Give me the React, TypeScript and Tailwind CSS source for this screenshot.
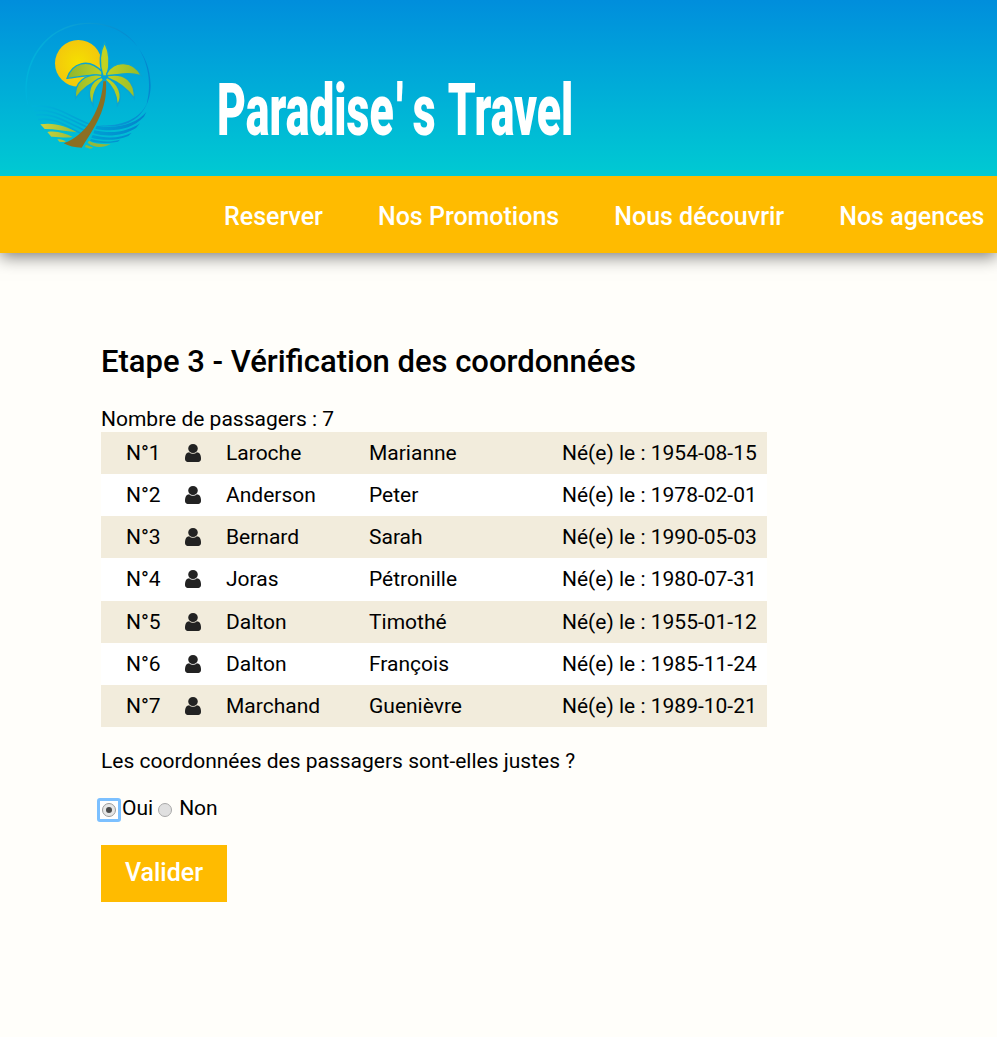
import React from "react";

const passengers = [
  ["Laroche", "Marianne", "1954-08-15"],
  ["Anderson", "Peter", "1978-02-01"],
  ["Bernard", "Sarah", "1990-05-03"],
  ["Joras", "Pétronille", "1980-07-31"],
  ["Dalton", "Timothé", "1955-01-12"],
  ["Dalton", "François", "1985-11-24"],
  ["Marchand", "Guenièvre", "1989-10-21"],
];

function Logo() {
  return (
    <svg viewBox="0 0 480 480" className="h-40 w-40 shrink-0" fill="none">
      <defs>
        <linearGradient id="ring" x1="50" y1="250" x2="425" y2="200" gradientUnits="userSpaceOnUse">
          <stop offset="0" stopColor="#00b4dc" />
          <stop offset="0.45" stopColor="#0a9fd6" />
          <stop offset="1" stopColor="#0486cf" />
        </linearGradient>
        <linearGradient id="wave" x1="60" y1="0" x2="410" y2="0" gradientUnits="userSpaceOnUse">
          <stop offset="0" stopColor="#00b4da" />
          <stop offset="0.5" stopColor="#00a2d4" />
          <stop offset="1" stopColor="#0482cc" />
        </linearGradient>
        <radialGradient id="sun">
          <stop offset="0" stopColor="#f5e000" />
          <stop offset="1" stopColor="#f3c80c" />
        </radialGradient>
        <linearGradient id="leaf" x1="170" y1="0" x2="395" y2="0" gradientUnits="userSpaceOnUse">
          <stop offset="0" stopColor="#8db52e" />
          <stop offset="0.5" stopColor="#c5d420" />
          <stop offset="1" stopColor="#93b92c" />
        </linearGradient>
        <linearGradient id="sand" x1="90" y1="0" x2="205" y2="0" gradientUnits="userSpaceOnUse">
          <stop offset="0" stopColor="#d0d43a" />
          <stop offset="1" stopColor="#93b83c" />
        </linearGradient>
      </defs>
      <path d="M55 288C30 170 105 42 238 42C350 42 422 130 422 225C422 290 385 338 325 347C305 350 282 350 262 345C325 352 388 330 410 282C438 185 390 38 238 38C95 38 22 180 55 288Z" fill="url(#ring)" />
      <circle cx="205" cy="160" r="70" fill="url(#sun)" />
      <g stroke="url(#wave)" strokeWidth="5">
        <path d="M65 289C130 280 170 315 240 343" />
        <path d="M72 302C130 295 170 325 232 352" />
        <path d="M78 315C130 308 165 335 222 360" />
        <path d="M84 329C130 320 165 346 212 370" />
      </g>
      <g fill="url(#wave)">
        <path d="M260 347C325 358 380 340 409 306L402 320C365 360 305 367 256 356Z" />
        <path d="M253 361C310 374 360 362 390 340L378 354C340 378 290 382 250 370Z" />
        <path d="M248 375C295 388 335 382 365 368L355 378C320 393 275 392 244 383Z" />
        <path d="M243 387C275 397 305 396 330 389L324 395C295 400 265 401 240 393Z" />
      </g>
      <g fill="url(#sand)">
        <path d="M91 343C130 336 170 348 200 367C165 363 135 357 104 357Z" />
        <path d="M112 366C140 361 165 370 188 381C165 386 145 379 124 380Z" />
        <path d="M142 388C153 386 162 391 168 395C160 397 155 395 148 395Z" />
        <path d="M237 392C255 402 280 404 302 402C280 413 255 416 233 398Z" />
        <path d="M228 404L250 413L240 416L225 411Z" />
      </g>
      <g fill="url(#leaf)" stroke="#0aa5d2" strokeWidth="4">
        <path d="M275 198C245 190 205 202 171 205C185 160 235 140 277 186Z" />
        <path d="M284 98C267 130 268 165 279 198L291 198C300 165 300 130 284 98Z" />
        <path d="M290 191C310 152 368 148 394 197C350 185 320 192 292 202Z" />
        <path d="M274 196C230 189 190 215 197 265C220 230 248 215 277 204Z" />
        <path d="M293 197C345 187 375 215 373 265C347 230 320 214 292 204Z" />
        <path d="M276 202C240 212 227 250 249 286C248 250 260 225 280 210Z" />
        <path d="M290 202C325 218 342 255 322 286C320 250 305 225 286 210Z" />
      </g>
      <path d="M280 214L288 214C292 285 270 330 215 413C195 413 175 408 161 400C235 375 275 290 280 214Z" fill="#8b6f22" />
    </svg>
  );
}

function UserIcon() {
  return (
    <svg viewBox="0 128 1280 1536" preserveAspectRatio="none" className="h-[18px] w-4 fill-[#222222]">
      <path d="M1280 1399q0 109-62.5 187t-150.5 78h-854q-88 0-150.5-78t-62.5-187q0-85 8.5-160.5t31.5-152 58.5-131 94-89 134.5-34.5q131 128 313 128t313-128q76 0 134.5 34.5t94 89 58.5 131 31.5 152 8.5 160.5zm-256-887q0 159-112.5 271.5t-271.5 112.5-271.5-112.5-112.5-271.5 112.5-271.5 271.5-112.5 271.5 112.5 112.5 271.5z" />
    </svg>
  );
}

export default function App() {
  return (
    <div className="min-h-[1037px] w-[997px] overflow-hidden bg-[#fffefa] font-['Roboto',sans-serif] text-[21px] leading-6 text-black">
      <header className="shadow-[0_4px_16px_rgba(0,0,0,0.5)]">
        <div className="flex h-44 bg-linear-to-b from-[#008edc] to-[#00cad2] pt-[10px] pl-[10px]">
          <Logo />
          <h1 className="mt-[58px] ml-[47px] flex h-20 origin-left scale-x-[0.61] text-[73px] leading-[84px] font-black whitespace-pre text-white">
            <span>Paradise</span>
            <span className="ml-1">'</span>
            <span className="ml-4">s</span>
            <span className="ml-5">Travel</span>
          </h1>
        </div>
        <nav className="flex h-[77px] items-center gap-[55px] bg-[#ffbb00] pt-1 pl-[224px] text-[25px] font-medium whitespace-nowrap text-white">
          <a>Reserver</a>
          <a>Nos Promotions</a>
          <a>Nous découvrir</a>
          <a>Nos agences</a>
        </nav>
      </header>
      <main className="pt-[89px] pl-[101px]">
        <h2 className="text-[31px] leading-10 font-medium">Etape 3 - Vérification des coordonnées</h2>
        <p className="mt-[25px] h-[25px]">Nombre de passagers : 7</p>
        <div className="w-[666px]">
          {passengers.map(([last, first, born], i) => (
            <div
              key={i}
              className="grid h-[42.14px] grid-cols-[59px_41px_143px_193px_1fr] items-center whitespace-nowrap pl-[25px] odd:bg-[#f2ecdc] even:bg-white"
            >
              <span>N°{i + 1}</span>
              <UserIcon />
              <span>{last}</span>
              <span>{first}</span>
              <span>Né(e) le : {born}</span>
            </div>
          ))}
        </div>
        <p className="mt-[22px]">Les coordonnées des passagers sont-elles justes ?</p>
        <div className="mt-[23px] flex h-6 items-center">
          <span className="mt-1 -ml-1 flex h-6 w-6 items-center justify-center rounded-[3px] border-[3px] border-[#7cc0ff] bg-white">
            <span className="flex h-3.5 w-3.5 items-center justify-center rounded-full border border-[#9c9c9c] bg-[#e6e6e6]">
              <span className="h-1.5 w-1.5 rounded-full bg-[#4a4a4a]" />
            </span>
          </span>
          <span className="ml-px">Oui</span>
          <span className="mt-1 ml-[5px] h-3.5 w-3.5 rounded-full border border-[#a9a9a9] bg-[#e0e0e0]" />
          <span className="ml-[7px]">Non</span>
        </div>
        <button className="mt-[25px] flex h-[57px] w-[126px] items-center justify-center bg-[#ffbb00] text-[25px] font-medium text-white">
          Valider
        </button>
      </main>
    </div>
  );
}
